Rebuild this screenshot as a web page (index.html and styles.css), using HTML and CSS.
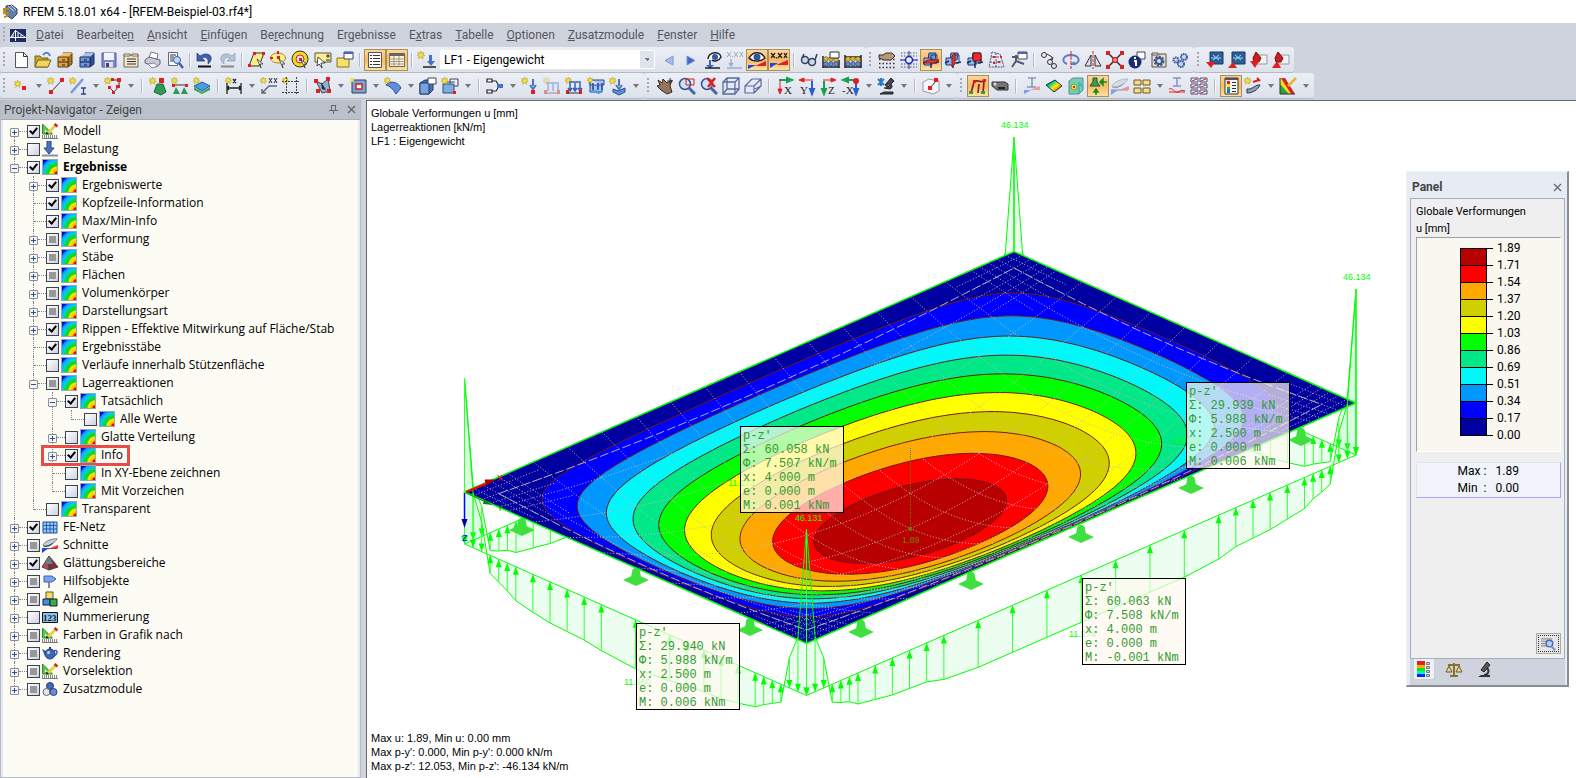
FILE: index.html
```html
<!DOCTYPE html>
<html lang="de">
<head>
<meta charset="utf-8">
<title>RFEM 5.18.01 x64 - [RFEM-Beispiel-03.rf4*]</title>
<link rel="stylesheet" href="styles.css">
</head>
<body>
<svg class="defs" aria-hidden="true">
  <defs>
    <radialGradient id="rb" cx="1" cy="1" r="1.3"><stop offset="0" stop-color="#e00"/><stop offset=".14" stop-color="#e00"/><stop offset=".2" stop-color="#fb0"/><stop offset=".38" stop-color="#ee0"/><stop offset=".45" stop-color="#2c2"/><stop offset=".6" stop-color="#0d5"/><stop offset=".68" stop-color="#0cf"/><stop offset=".84" stop-color="#19f"/><stop offset=".9" stop-color="#02f"/><stop offset="1" stop-color="#00c"/></radialGradient>
    <linearGradient id="hot" x1="0" y1="0" x2="1" y2="1"><stop offset="0" stop-color="#00f"/><stop offset=".3" stop-color="#0c8"/><stop offset=".55" stop-color="#fe0"/><stop offset="1" stop-color="#e00"/></linearGradient>
  </defs>
  <symbol id="star" viewBox="0 0 18 18"><path d="M5 0l1 3 3-1-1 3 2 1-3 1 1 3-3-2-3 2 1-3-3-1 2-1-1-3 3 1z" fill="#f2e23a" stroke="#a8941c" stroke-width=".7"/></symbol>
  <symbol id="iso" viewBox="0 0 16 16"><rect x=".5" y=".5" width="15" height="15" fill="url(#rb)" stroke="#9aa"/></symbol>
  <symbol id="draft" viewBox="0 0 16 16"><path d="M.500 1l10 10H.5z" fill="#5fc44a" stroke="#2e8b2e"/><path d="M3 6.500l2.500 2.500H3z" fill="#fff"/><path d="M6 10l8-8" stroke="#e9d04a" stroke-width="3"/><path d="M12.500 1l3 2.500" stroke="#c03030" stroke-width="2.500"/><path d="M4 11.500l.5-3 2.500 2.500z" fill="#222"/><path d="M0 13.500h16" stroke="#888" stroke-width="3" stroke-dasharray="1 1"/><path d="M0 15.500h16" stroke="#777"/></symbol>
  <symbol id="load" viewBox="0 0 16 16"><path d="M5 0h4v7h3l-5 6-5-6h3z" fill="#4a72c4" stroke="#2a4585"/><path d="M0 14.500h16" stroke="#8a8f98" stroke-width="2"/></symbol>
  <symbol id="beam" viewBox="0 0 18 18"><path d="M1 9c3-5 10-7 16-7-3 5-8 8-14 8z" fill="#c4cede" stroke="#6b7688"/><path d="M1 10c5 0 10-2 13-5-3 5-8 7-12 6z" fill="#44536c"/><path d="M0 13h17" stroke="#334"/><path d="M0 18l7-5H0z" fill="#24e"/><path d="M8 13h10V9z" fill="#e33"/></symbol>
  <symbol id="cubes" viewBox="0 0 18 18"><path d="M7 2h7l-1 7H6z" fill="#6fa0dc" stroke="#203a70"/><path d="M2 7h8v7H2z" fill="#8fb8e8" stroke="#203a70"/><path d="M9 4h6v8H9z" fill="none" stroke="#203a70"/><path d="M1 12l4-2M12 12l5-1M9 8v9" stroke="#17306c" stroke-width="1.500"/></symbol>
  <symbol id="lens" viewBox="0 0 18 18"><circle cx="7" cy="7" r="5.500" fill="#cfe0f6" stroke="#35518f" stroke-width="1.500"/><path d="M11 11l6 6" stroke="#4a63a8" stroke-width="3"/></symbol>
</svg>

<header class="titlebar">
  <svg class="logo" viewBox="0 0 16 16"><path d="M4 2l6-1 5 4v5l-5 5-6-4z" fill="#5f7ea8" stroke="#33486a"/><path d="M6 2l6 5M9 1l5 5" stroke="#c2d3ea"/><path d="M7 5H2v4c4-2 6 4 0 4" fill="none" stroke="#c08a18" stroke-width="2"/></svg>
  <h1>RFEM 5.18.01 x64 - [RFEM-Beispiel-03.rf4*]</h1>
</header>

<nav class="menubar">
  <span class="grip"></span>
  <svg class="menu-logo" viewBox="0 0 16 13"><path d="M0 0h16v13H0z" fill="#1d2c63"/><path d="M0 8.500h16M5.500 1v11M6 2l9 6M5 2L1 8M3 5v3M8 4v4M11 6v2" stroke="#fff" fill="none"/></svg>
  <a href="#"><u>D</u>atei</a><a href="#">Bearbeite<u>n</u></a><a href="#"><u>A</u>nsicht</a><a href="#"><u>E</u>infügen</a><a href="#">Be<u>r</u>echnung</a><a href="#">Er<u>g</u>ebnisse</a><a href="#">E<u>x</u>tras</a><a href="#"><u>T</u>abelle</a><a href="#"><u>O</u>ptionen</a><a href="#"><u>Z</u>usatzmodule</a><a href="#"><u>F</u>enster</a><a href="#"><u>H</u>ilfe</a>
</nav>

<div class="toolrow">
  <div class="toolbar">
    <span class="grip"></span>
    <button title="Neu"><svg viewBox="0 0 18 18"><path d="M3.500 1.500h8l4 4v11h-12z" fill="#fff" stroke="#555"/><path d="M11.500 1.500v4h4" class="sk"/></svg></button>
    <button title="Öffnen"><svg viewBox="0 0 18 18"><path d="M1 16V5h5l2 2h6v9z" fill="#c9a227" stroke="#7d6215"/><path d="M1 16l3-7h13l-3 7z" fill="#f0d468" stroke="#7d6215"/><path d="M9 4c3-4 6-2 7 1" fill="none" stroke="#4a86d0" stroke-width="2"/></svg></button>
    <button title="Projektmanager"><svg viewBox="0 0 18 18"><path d="M7 2h9v11l-4 3V6z" fill="#a5701f" stroke="#5c3c0c"/><path d="M7 2l9 0-4 4H3z" fill="#f0c477"/><path d="M2 6h10v10H2z" fill="#dca24a" stroke="#5c3c0c"/><path d="M2 11h10M6 9h3M6 14h3" stroke="#3a2505"/></svg></button>
    <button title="Blockmanager"><svg viewBox="0 0 18 18"><path d="M7 2h9v11l-4 3V6z" fill="#2d4f96" stroke="#1a2f60"/><path d="M7 2l9 0-4 4H3z" fill="#a8c0ea"/><path d="M2 6h10v10H2z" fill="#6e93d8" stroke="#1a2f60"/><path d="M2 11h10M6 9h3M6 14h3" stroke="#0d1c40"/></svg></button>
    <button title="Speichern"><svg viewBox="0 0 18 18"><path d="M2 2h14v14H2z" fill="#7f86cc" stroke="#5a60a8"/><path d="M4 2h10v7H4z" fill="#f4f4fc"/><path d="M5 11h8v5H5z" fill="#dfe4ea"/><path d="M6 12h3v4H6z" fill="#446"/></svg></button>
    <button title="Modelldaten"><svg viewBox="0 0 18 18"><path d="M2 4h14v12H2z" fill="#f2e6cc" stroke="#7a6548"/><path d="M2 3h6v2H2zM10 3h6v2h-6z" fill="#fff" stroke="#7a6548"/><path d="M5 8h9M5 10.500h9M5 13h9" class="sk"/></svg></button>
    <button title="Drucken"><svg viewBox="0 0 18 18"><path d="M5 7l2-6 7 2-1 5z" fill="#fff" stroke="#778"/><path d="M1 9l4-3 11 3v4l-4 3-11-4z" fill="#c6cad4" stroke="#667"/><path d="M4 13l6-1 4 3-6 2z" fill="#f4f6fa" stroke="#889"/></svg></button>
    <button title="Druckvorschau"><svg viewBox="0 0 18 18"><path d="M2.500 1.500h9v13h-9z" fill="#fff" stroke="#667"/><path d="M4 4h6M4 6h4M4 8h3M4 10h3" class="sk"/><circle cx="11" cy="9" r="3.500" fill="#bcd8f4" stroke="#3a5c9a"/><path d="M13 12l4 5" stroke="#3a62b0" stroke-width="2.500"/></svg></button>
    <i class="sep"></i>
    <button title="Rückgängig"><svg viewBox="0 0 18 18"><path d="M1 2v8h8L6 7c4-2 7 1 6 6 5-4 4-10-2-10-3 0-4 1-6 2z" fill="#3c5fb0" stroke="#1d3775" stroke-width=".7"/><path d="M2 15.500h13" stroke="#111" stroke-width="2"/></svg></button>
    <button title="Wiederherstellen"><svg viewBox="0 0 18 18"><path d="M17 2v8H9l3-3C8 5 5 8 6 13 1 9 2 3 8 3c3 0 4 1 6 2z" fill="#b3c4d6" stroke="#8b9bb0" stroke-width=".7"/><path d="M3 15.500h13" stroke="#888" stroke-width="2"/></svg></button>
    <i class="sep"></i>
    <button title="Auswahl Rhomboid"><svg viewBox="0 0 18 18"><path d="M6 2h10l-5 13H1z" fill="#f7ec8c" stroke="#333"/><path d="M5 1h3v3H5zM14 1h3v3h-3zM0 13h3v3H0z" class="r"/><path d="M9 8l6 5-3 0 1 4z" fill="#fff" stroke="#222" stroke-width=".7"/></svg></button>
    <button title="Auswahl Ellipse"><svg viewBox="0 0 18 18"><ellipse cx="8" cy="7" rx="7.500" ry="5" fill="#f9ee90" stroke="#b08a20"/><path d="M7 5h3v3H7zM7 0h2v3H7zM0 6h3v2H0z" class="r"/><path d="M9 8l6 5-3 0 1 4z" fill="#fff" stroke="#222" stroke-width=".7"/></svg></button>
    <button title="Auswahl Ring"><svg viewBox="0 0 18 18"><circle cx="8" cy="8" r="6" fill="none" stroke="#f0d820" stroke-width="4"/><circle cx="8" cy="8" r="8" class="sk"/><circle cx="8" cy="8" r="4" class="sr"/><path d="M7 7h3v3H7z" class="r"/><path d="M9 9l6 4-3 0 1 4z" fill="#fff" stroke="#222" stroke-width=".7"/></svg></button>
    <button title="Mehrfachauswahl"><svg viewBox="0 0 18 18"><path d="M1 2h16v9H1z" fill="#f9ee90" stroke="#555"/><path d="M12 5h4M14 3v4M12 9h4" class="sk"/><path d="M4 6l7 6-4 0 1 5-3-4-2 2z" fill="#fff" stroke="#222" stroke-width=".8"/></svg></button>
    <button title="Auswahl speziell"><svg viewBox="0 0 18 18"><path d="M1 7h12v9H1z" fill="#f5e26a" stroke="#8a7420"/><path d="M8 1h9v7H8z" fill="#fff" stroke="#445"/><path d="M8 1h9v2H8z" fill="#4b66b0"/></svg></button>
    <i class="sep"></i>
    <button class="on" title="Navigator"><svg viewBox="0 0 18 18"><path d="M2.500 1.500h13v15h-13z" fill="#fdfdfd" stroke="#555"/><path d="M7 4.500h7M7 7.500h7M7 10.500h7M7 13.500h7M4 4.500h2M4 7.500h2M4 10.500h2M4 13.500h2" class="sk"/></svg></button>
    <button class="on" title="Tabellen"><svg viewBox="0 0 18 18"><path d="M1.500 2.500h15v13h-15z" fill="#fdf3d8" stroke="#665"/><path d="M1 3h16v2H1z" fill="#666"/><path d="M1 8h16M1 10.500h16M1 13h16M6 5v11M11 5v11" stroke="#998"/></svg></button>
    <i class="sep"></i>
    <button title="Neuer Lastfall"><svg viewBox="0 0 18 18"><use href="#star" width="14" height="14" x="-1"/><path d="M11 4h3v6h3l-4 5-4-5h2z" fill="#4a72c4"/><path d="M5 16h13" stroke="#222" stroke-width="1.500"/></svg></button>
    <select class="case" aria-label="Lastfall"><option>LF1 - Eigengewicht</option></select>
    <button title="Vorheriger"><svg viewBox="0 0 18 18"><path d="M13 5v9L5 9.500z" fill="#a9bbe6" stroke="#7f95cc"/></svg></button>
    <button title="Nächster"><svg viewBox="0 0 18 18"><path d="M5 5v9l8-4.500z" fill="#3f68c8" stroke="#7a94d8"/></svg></button>
    <button title="Lasten anzeigen"><svg viewBox="0 0 18 18"><path d="M4 8c1-8 12-8 13-2-2 4-7 5-9 3" fill="#f4f6fa" stroke="#222" stroke-width="1.500"/><circle cx="11" cy="6" r="3" fill="#36589c"/><path d="M5 9v5H2l4 4 4-4H7V9z" fill="#3a66b8"/><path d="M1 17h15" stroke="#222" stroke-width="1.500"/></svg></button>
    <button title="Lastwerte"><svg viewBox="0 0 18 18"><path d="M1 1l4 5M5 1L1 6M6 6h1M8 1l4 5M12 1L8 6M14 1l3 5M17 1l-3 5" stroke="#9aa"/><path d="M5 8v7M3 12l2 3 2-3M1 17h15" stroke="#9ab0d4" stroke-width="1.500" fill="none"/></svg></button>
    <button class="on" title="Ergebnisse anzeigen"><svg viewBox="0 0 18 18"><path d="M1 7c4-7 12-7 16 0-4 4-12 4-16 0z" fill="#fff" stroke="#222" stroke-width="1.500"/><circle cx="9" cy="6" r="3.500" fill="#2c54a0"/><path d="M0 18l8-4H0z" fill="#24e"/><path d="M7 15h11V10z" class="r"/></svg></button>
    <button class="on" title="Ergebniswerte"><svg viewBox="0 0 18 18"><path d="M1 2l4 5M5 2L1 7M6 7h1M8 2l4 5M12 2L8 7M14 2l3 5M17 2l-3 5" stroke="#222" stroke-width="1.300"/><path d="M0 17l8-5H0z" fill="#24e"/><path d="M6 14h12V9z" class="r"/></svg></button>
    <i class="sep"></i>
    <button title="Brille"><svg viewBox="0 0 18 18"><circle cx="5" cy="9" r="3.500" fill="#ccd8ec" stroke="#33415e" stroke-width="1.500"/><circle cx="12" cy="11" r="3.500" fill="#ccd8ec" stroke="#33415e" stroke-width="1.500"/><path d="M2 7l2-4M15 9l2-6" stroke="#33415e" stroke-width="1.500"/></svg></button>
    <button title="Filter"><svg viewBox="0 0 18 18"><path d="M1 5v12M17 9v8M1 16h16" stroke="#222" stroke-width="1.500" fill="none"/><g fill="#dcb93a" stroke="#7a6110" stroke-width=".7"><circle cx="4" cy="8" r="2.300"/><circle cx="9" cy="8" r="2.300"/><circle cx="14" cy="9" r="2.300"/></g><g fill="#6a8cd0" stroke="#20376c" stroke-width=".7"><circle cx="4" cy="13" r="2.300"/><circle cx="9" cy="13" r="2.300"/><circle cx="14" cy="13" r="2.300"/></g><path d="M8 1h9v6H8z" fill="#fff" stroke="#334"/></svg></button>
    <button title="Rechner"><svg viewBox="0 0 18 18"><path d="M1 4v13M17 4v13M1 16h16M1 6h16" stroke="#222" stroke-width="1.500" fill="none"/><g fill="#dcb93a" stroke="#7a6110" stroke-width=".7"><circle cx="4" cy="8" r="2.300"/><circle cx="9" cy="8" r="2.300"/><circle cx="14" cy="8" r="2.300"/></g><g fill="#6a8cd0" stroke="#20376c" stroke-width=".7"><circle cx="4" cy="13" r="2.300"/><circle cx="9" cy="13" r="2.300"/><circle cx="14" cy="13" r="2.300"/></g></svg></button>
  </div>
  <div class="toolbar">
    <span class="grip"></span>
    <button title="Raster"><svg viewBox="0 0 18 18"><path d="M1 4.500h16M1 8.500h16M1 12.500h16M1 16.500h16" stroke="#333" stroke-width="1.500" stroke-dasharray="1.500 2"/><path d="M1 4h4l3-2h6l3 3-4 4H6L1 7z" fill="#b89878" stroke="#3c3028"/></svg></button>
    <button title="Fangen"><svg viewBox="0 0 18 18"><path d="M1 2h16M1 5h16M1 13h16M1 16h16M1 9h16" stroke="#555" stroke-dasharray="1.500 1.500"/><path d="M9 0v18M0 9h18" stroke="#1a2ac0"/><circle cx="9" cy="9" r="3.500" fill="#e8ecf5" stroke="#1a2ac0" stroke-width="1.500"/></svg></button>
    <button class="on" title="Arbeitsebene XY"><svg viewBox="0 0 18 18"><use href="#cubes"/><path d="M1 12l5-3h11l-4 3z" fill="#e23b3b" stroke="#8d1515"/></svg></button>
    <button title="Arbeitsebene YZ"><svg viewBox="0 0 18 18"><use href="#cubes"/><path d="M8 5l3-3v11l-3 3z" fill="#e23b3b" stroke="#8d1515"/></svg></button>
    <button title="Arbeitsebene XZ"><svg viewBox="0 0 18 18"><use href="#cubes"/><path d="M7 2h8v8H7z" fill="#f02a2a" stroke="#5c0f0f"/></svg></button>
    <button title="Rasterlinien"><svg viewBox="0 0 18 18"><path d="M4 1L1 16h15L12 3zM8 2v14M3 6h10M2 11h13" class="n" stroke="#557" stroke-dasharray="2 1"/><path d="M5 5h2v2H5zM10 10h2v2h-2zM5 11h2v2H5zM12 5h2v2h-2z" class="r"/></svg></button>
    <button title="Objektfang"><svg viewBox="0 0 18 18"><path d="M2 16l4-6M6 10l8 3M6 10V4M2 6h6" stroke="#557" stroke-width="2" fill="none"/><path d="M8 1h9v7H8z" fill="#fff" stroke="#445"/><path d="M8 1h9v2H8z" fill="#4b66b0"/></svg></button>
    <i class="sep"></i>
    <button title="Kopieren"><svg viewBox="0 0 18 18"><circle cx="4" cy="4" r="2.500" class="sk"/><circle cx="10" cy="11" r="2.500" class="sk"/><circle cx="14" cy="15" r="2.500" class="sk"/><path d="M7 3l5 3v3M10 8l2 1 1-3" class="sk"/></svg></button>
    <button title="Drehen"><svg viewBox="0 0 18 18"><path d="M5 13C-2 10 2 4 9 4s11 6 4 9l-2-2M13 13h-4" fill="none" stroke="#5a7cc0" stroke-width="2"/><path d="M9 0v18" class="sr" stroke-dasharray="4 1"/></svg></button>
    <button title="Spiegeln"><svg viewBox="0 0 18 18"><path d="M7 4v11H1zM11 4v11h6z" fill="#dde" stroke="#333"/><path d="M9 0v18" class="sr" stroke-dasharray="3 1"/></svg></button>
    <button title="Verbinden"><svg viewBox="0 0 18 18"><path d="M2 2l14 14M16 2L2 16" stroke="#333" stroke-width="1.500"/><path d="M0 0h4v4H0zM14 0h4v4h-4zM0 14h4v4H0zM14 14h4v4h-4z" class="r"/><circle cx="9" cy="9" r="2.500" fill="#f88" stroke="#c00"/></svg></button>
    <button title="Info"><svg viewBox="0 0 18 18"><path d="M9 1h8v7H9z" fill="#fff" stroke="#445"/><circle cx="7" cy="11" r="6.500" fill="#1b2a72"/><path d="M6 10h2v5M7 6v2" stroke="#fff" stroke-width="2" fill="none"/></svg></button>
    <button title="Einstellungen"><svg viewBox="0 0 18 18"><path d="M2 3h14v13H2z" fill="#e8e0d0" stroke="#5c5140"/><path d="M2 2h6v2H2z" fill="#fff" stroke="#5c5140"/><circle cx="9" cy="10" r="4" fill="none" stroke="#3a5a9c" stroke-width="3" stroke-dasharray="2 1"/><circle cx="9" cy="10" r="3" fill="none" stroke="#3a5a9c" stroke-width="2"/></svg></button>
    <button title="Optionen"><svg viewBox="0 0 18 18"><g fill="#cdd8ee" stroke="#3a5a9c" stroke-width="2" stroke-dasharray="1.500 .6"><circle cx="4" cy="9" r="2.500"/><circle cx="12" cy="6" r="3"/><circle cx="9" cy="13" r="3"/></g></svg></button>
  </div>
  <div class="toolbar">
    <span class="grip"></span>
    <button title="Import"><svg viewBox="0 0 18 18"><path d="M4 1h13v12H4z" fill="#2c5f96" stroke="#173a63"/><path d="M7 4l6 5M7 9l6-5M5 7h10" stroke="#a8d4f4"/><path d="M0 11h9l-4 6z" class="r"/></svg></button>
    <button title="Export"><svg viewBox="0 0 18 18"><path d="M4 1h13v12H4z" fill="#2c5f96" stroke="#173a63"/><path d="M7 4l6 5M7 9l6-5M5 7h10" stroke="#a8d4f4"/><path d="M0 17h9l-4-6z" class="r"/></svg></button>
    <button title="Import Modul"><svg viewBox="0 0 18 18"><path d="M6 4h11v9H6z" fill="#f2f2f2" stroke="#99a"/><path d="M6 1l5 6-2 4H4l-1-4z" fill="#c81e1e" stroke="#7a0d0d"/><path d="M0 10h9l-4 7z" class="r"/></svg></button>
    <button title="Export Modul"><svg viewBox="0 0 18 18"><path d="M6 4h11v9H6z" fill="#f2f2f2" stroke="#99a"/><path d="M6 1l5 6-2 4H4l-1-4z" fill="#c81e1e" stroke="#7a0d0d"/><path d="M0 17h9l-4-7z" class="r"/></svg></button>
  </div>
</div>

<div class="toolrow second">
  <div class="toolbar">
    <span class="grip"></span>
    <button title="Knoten"><svg viewBox="0 0 18 18"><use href="#star" width="13" height="13" x="2" y="3"/><path d="M10 9h4v4h-4z" class="r"/></svg></button><button class="drop" title="Knoten wählen"></button>
    <button title="Linie"><svg viewBox="0 0 18 18"><use href="#star" width="13" height="13"/><path d="M4 15L15 3" class="sk"/><path d="M13 1h4v4h-4zM2 13h4v4H2z" class="r"/></svg></button>
    <button title="Stab"><svg viewBox="0 0 18 18"><use href="#star" width="13" height="13"/><path d="M2 16L14 2" stroke="#7b9ad8" stroke-width="2.500"/><path d="M12 11h5M14.500 11v6M12 17h5" stroke="#2c4a8c" stroke-width="1.300"/></svg></button><button class="drop" title="Stab wählen"></button>
    <button title="Polylinie"><svg viewBox="0 0 18 18"><use href="#star" width="13" height="13"/><path d="M8 3h7v6l-5 6-4-4" class="sk"/><path d="M7 1h3v3H7zM13 1h4v4h-4zM12 8h4v3h-4zM4 9h3v3H4zM8 14h3v3H8z" class="r"/></svg></button><button class="drop" title="Polylinie wählen"></button>
    <i class="sep"></i>
    <button title="Knotenlager"><svg viewBox="0 0 18 18"><use href="#star" width="13" height="13"/><path d="M10 1h5v5h-5z" class="r"/><path d="M8 7h6l3 8-5 3-7-3z" fill="#2f9a58" stroke="#1b6a38"/></svg></button>
    <button title="Linienlager"><svg viewBox="0 0 18 18"><use href="#star" width="12" height="12"/><path d="M3 8h12" class="sk"/><path d="M1 7h3v3H1zM14 7h3v3h-3z" class="r"/><path d="M5 10l4 7H2zM13 10l4 7h-7z" fill="#2f9a58"/></svg></button>
    <button title="Fläche"><svg viewBox="0 0 18 18"><path d="M1 9l8-4 8 4-8 5z" fill="#4a9de0" stroke="#1c5c98"/><path d="M1 10l8 5 8-5v3l-8 4-8-4z" fill="#3aa655"/><use href="#star" width="12" height="12"/></svg></button>
    <i class="sep"></i>
    <button title="Bemaßung"><svg viewBox="0 0 18 18"><use href="#star" width="12" height="12"/><path d="M2 6v11M16 6v11M2 11h14M4 9l-2 2 2 2M14 9l2 2-2 2M8 2l3 4M11 2L8 6" stroke="#222" fill="none" stroke-width="1.300"/></svg></button><button class="drop" title="Bemaßung wählen"></button>
    <button title="Kommentar"><svg viewBox="0 0 18 18"><use href="#star" width="12" height="12"/><path d="M9 1l3 5M12 1L9 6M14 1l3 5M17 1l-3 5" stroke="#222"/><path d="M17 9H9l-7 7M2 12v4h4" fill="none" stroke="#667" stroke-width="1.500"/></svg></button>
    <button title="Hilfslinien"><svg viewBox="0 0 18 18"><use href="#star" width="12" height="12"/><path d="M4.500 0v18M14.500 0v18M0 4.500h18M0 15.500h18" stroke="#444" stroke-dasharray="2 1"/></svg></button>
    <i class="sep"></i>
    <button title="Fläche teilen"><svg viewBox="0 0 18 18"><path d="M2 4l6 3 6-5 2 12-8 2z" fill="#8db0dc" stroke="#444"/><path d="M0 2h4v4H0zM12 0h4v4h-4zM13 12h4v4h-4zM2 12h4v4H2z" class="r"/><path d="M7 5l5 8-4-1z" fill="#222"/></svg></button><button class="drop" title="Fläche wählen"></button>
    <button title="Öffnung"><svg viewBox="0 0 18 18"><path d="M3 3h14v13H3z" fill="#7ea0d6" stroke="#345"/><path d="M7 7h6v5H7z" fill="#fff" stroke="#c22" stroke-width="1.500"/><circle cx="3" cy="3" r="2" fill="#f2e23a"/></svg></button><button class="drop" title="Öffnung wählen"></button>
    <button title="Schale"><svg viewBox="0 0 18 18"><path d="M2 8c5-5 12-3 15 3l-5 6C9 12 6 9 2 8z" fill="#5d8fdc" stroke="#28508f"/><use href="#star" width="12" height="12"/></svg></button><button class="drop" title="Schale wählen"></button>
    <button title="Volumenkörper"><svg viewBox="0 0 18 18"><path d="M1 6l5-3h8v10l-4 4H1z" fill="#4472b4" stroke="#1d3d70"/><path d="M1 6h9v11H1z" fill="#7aa3dc" stroke="#1d3d70"/><path d="M9 1h8v6H9z" fill="#fff" stroke="#445"/></svg></button>
    <button title="Neues Volumen"><svg viewBox="0 0 18 18"><path d="M9 2h8v7H9zM6 5h8" fill="#eef" stroke="#445"/><path d="M2 7h11v9H2z" fill="#7eaadc" stroke="#28508f"/><use href="#star" width="13" height="13"/><path d="M12 14h3v3h-3z" class="r"/></svg></button><button class="drop" title="Volumen wählen"></button>
    <i class="sep"></i>
    <button title="Gelenk"><svg viewBox="0 0 18 18"><path d="M1 2h5v3H1zM1 13h5v3H1zM6 4h4l3 5M6 14h4l3-5" fill="#fff" stroke="#222" stroke-width="1.200"/><path d="M11 7h6v4h-6z" fill="#4a72c4"/></svg></button><button class="drop" title="Gelenk wählen"></button>
    <button title="Knotenlast"><svg viewBox="0 0 18 18"><use href="#star" width="13" height="13"/><path d="M12 2v7M9 8l3 4 3-4" stroke="#4a72c4" stroke-width="2" fill="none"/><path d="M10 13h4v4h-4z" class="r"/></svg></button>
    <button class="off" title="Stablast"><svg viewBox="0 0 18 18"><use href="#star" width="12" height="12"/><path d="M3 6h13M5 6v8M10 6v8M15 6v8" stroke="#4a72c4" stroke-width="1.500"/><path d="M1 13h3v4H1zM14 13h3v4h-3z" class="r"/><path d="M3 16h12" class="sk"/></svg></button>
    <button title="Linienlast"><svg viewBox="0 0 18 18"><use href="#star" width="12" height="12"/><path d="M4 5h12M5 6v8M10 6v8M15 6v8M3 11l2 3 2-3M8 11l2 3 2-3M13 11l2 3 2-3" stroke="#3a62b4" stroke-width="1.500" fill="none"/><path d="M1 13h3v4H1zM14 13h3v4h-3z" class="r"/><path d="M3 16h12" class="sk"/></svg></button>
    <button title="Flächenlast"><svg viewBox="0 0 18 18"><path d="M3 3h14v5H3zM3 3v12h12V8" fill="#a8c4ec" stroke="#234b8c"/><path d="M6 6v7M11 6v7M15 6v7" stroke="#3a62b4" stroke-width="2"/><path d="M1 14l5-1 10 2-4 2z" fill="#4d9ae0"/><use href="#star" width="11" height="11"/></svg></button>
    <button title="Freie Last"><svg viewBox="0 0 18 18"><use href="#star" width="13" height="13"/><path d="M10 2v7M7 8l3 4 3-4" stroke="#4a72c4" stroke-width="2" fill="none"/><path d="M4 12l5 2 7-3v4l-6 3-6-3z" fill="#5d8fdc" stroke="#28508f"/></svg></button><button class="drop" title="Last wählen"></button>
  </div>
  <div class="toolbar">
    <span class="grip"></span>
    <button title="Verschieben"><svg viewBox="0 0 18 18"><path d="M2 3l4 3 1-4 4 4 5-3-2 6 2 6-5 2-6-4-4-4 3-1z" fill="#94755c" stroke="#362920"/><path d="M14 1v6M11 4h6" class="sk"/></svg></button>
    <button title="Zoom"><svg viewBox="0 0 18 18"><use href="#lens"/><path d="M8 2h8v6H8z" class="n" stroke="#c22"/></svg></button>
    <button title="Zoom zurück"><svg viewBox="0 0 18 18"><use href="#lens"/><path d="M7 1l8 9M15 1L8 10" class="sr" stroke-width="2.500"/></svg></button>
    <button title="Isometrie"><svg viewBox="0 0 18 18"><path d="M5 1h12v11H5zM1 5h12v12H1zM1 5l4-4M13 5l4-4M13 17l4-5M1 17l4-5" fill="none" stroke="#5a6c9c" stroke-width="1.300"/></svg></button>
    <button title="Perspektive"><svg viewBox="0 0 18 18"><path d="M8 2h9v7l-6 3M1 9h9v7H1zM1 9l7-7M10 9l7-7M10 16l7-7" fill="#e4e9f4" stroke="#5a6c9c" stroke-width="1.200"/></svg></button>
    <i class="sep"></i>
    <button title="Ansicht X"><svg viewBox="0 0 18 18"><path d="M3 3h10M11 1l5 2-5 2z" class="sg"/><path d="M4 4v9M2 12l2 5 2-5z" class="sr"/><text x="8" y="17" class="ax">X</text></svg></button>
    <button title="Ansicht Y"><svg viewBox="0 0 18 18"><path d="M5 3h10M6 1L1 3l5 2z" class="sr"/><path d="M14 4v9M12 12l2 5 2-5z" class="sb"/><text x="2" y="17" class="ax">Y</text></svg></button>
    <button title="Ansicht Z"><svg viewBox="0 0 18 18"><path d="M3 3h10M11 1l5 2-5 2z" class="sr"/><path d="M4 4v9M2 12l2 5 2-5z" class="sg"/><text x="8" y="17" class="ax">Z</text></svg></button>
    <button title="Ansicht -X"><svg viewBox="0 0 18 18"><path d="M5 3h8M6 1L1 3l5 2z" class="sg"/><path d="M14 4v9M12 12l2 5 2-5z" class="sb"/><circle cx="14" cy="4" r="3" class="r"/><text x="0" y="17" class="ax">-X</text></svg></button><button class="drop" title="Ansicht wählen"></button>
    <button title="Sichtbarkeit"><svg viewBox="0 0 18 18"><path d="M1 2l6 6M7 2L1 8M4 1v8" stroke="#2a7ac8" stroke-width="2"/><path d="M14 1l3 3-6 6-3-2zM7 11l6 1c3-1 2-4 1-5M3 17h13v-2H7z" fill="#445" stroke="#222"/></svg></button><button class="drop" title="Sichtbarkeit wählen"></button>
    <i class="sep"></i>
    <button title="Schnitt"><svg viewBox="0 0 18 18"><path d="M1 5l6-3 10 2v10l-6 3-10-3z" fill="#f5f6fa" stroke="#99a"/><path d="M8 11l6-7" class="sk"/><path d="M12 1h4v4h-4zM6 9h4v4H6z" class="r"/></svg></button><button class="drop" title="Schnitt wählen"></button>
  </div>
  <div class="toolbar">
    <span class="grip"></span>
    <button class="on" title="Verformung"><svg viewBox="0 0 18 18"><path d="M2 16L5 5c3-3 5 1 10-1l-1 12M9 16l1-9" fill="none" stroke="#8a2020" stroke-width="1.700"/><path d="M0 14h4v3H0zM12 14h4v3h-4z" class="g"/><path d="M4 3h3v3H4zM14 2h3v3h-3z" class="r"/></svg></button>
    <button title="Video"><svg viewBox="0 0 18 18"><path d="M1 5h13l3 2v6H6l-5-4z" fill="#777" stroke="#333"/><circle cx="4" cy="7" r="1.500" fill="#ddd"/><path d="M7 10h7v2H7z" fill="#222"/></svg></button>
    <i class="sep"></i>
    <button title="Stabschnittgrößen"><svg viewBox="0 0 18 18"><path d="M5 1h8M9 1v9M4 10h9" stroke="#8296b8" stroke-width="1.500"/><path d="M1 17l7-4H1z" fill="#7a9af0"/><path d="M7 13h10V9z" fill="#f29a9a"/></svg></button>
    <button title="Flächenergebnisse"><svg viewBox="0 0 18 18"><path d="M1 8l9-5 7 6-8 6z" fill="url(#hot)" stroke="#135"/></svg></button>
    <button title="Volumenergebnisse"><svg viewBox="0 0 18 18"><path d="M2 4l4-3h10v12l-4 4H2z" fill="#73cfae" stroke="#5a8a98"/><circle cx="7" cy="10" r="3" fill="#f3e35a" stroke="#58b048"/><circle cx="7" cy="10" r="1.200" class="r"/><path d="M12 5v11M13 6l2 4" stroke="#2f9ec0"/></svg></button>
    <button class="on" title="Lagerreaktionen"><svg viewBox="0 0 18 18"><path d="M4 1h4v4l3 4H1l3-4z" fill="#3d9a5a" stroke="#1b5a30"/><path d="M18 5h-5M14 2l-3 3 3 3z" fill="#1a8a1a" stroke="#1a8a1a" stroke-width="1.500"/><path d="M7 18v-4M5 15l2-3 2 3z" fill="#1a8a1a" stroke="#1a8a1a" stroke-width="1.500"/></svg></button>
    <button class="off" title="Schnitte"><svg viewBox="0 0 18 18"><use href="#beam"/></svg></button>
    <button title="Fenster anordnen"><svg viewBox="0 0 18 18"><path d="M1 3h7v5H1zM10 3h7v5h-7zM1 11h7v5H1zM10 11h7v5h-7z" fill="#f3dc8c" stroke="#6c5a20"/></svg></button><button class="drop" title="Anordnung wählen"></button>
    <button title="Verlauf"><svg viewBox="0 0 18 18"><path d="M5 1h8M9 1v8M5 9h8" stroke="#8296b8" stroke-width="1.500"/><path d="M1 12c4-2 6 5 9 3s4-2 7-1M1 15h16" class="sr"/></svg></button>
    <button title="Diagramme"><svg viewBox="0 0 18 18"><path d="M1 1h7v4H1zM10 1h7v4h-7zM1 7h7v4H1zM10 7h7v4h-7zM1 13h7v4H1zM10 13h7v4h-7z" fill="#eef2fc" stroke="#44507c"/><path d="M2 4l5-2M11 4l5-2M2 10l5-2M11 10l5-2M2 16l5-2M11 16l5-2" class="sr"/></svg></button>
    <i class="sep"></i>
    <button class="on" title="Panel"><svg viewBox="0 0 18 18"><path d="M3 1h13v16H3z" fill="#f4f4f4" stroke="#333"/><path d="M3 1h13v2H3z" fill="#555"/><path d="M5 4h3v3H5z" class="r"/><path d="M5 7h3v3H5z" class="y"/><path d="M5 10h3v3H5z" class="g"/><path d="M5 13h3v3H5z" class="b"/><path d="M10 5.500h4M10 8.500h4M10 11.500h4M10 14.500h4" class="sk"/></svg></button>
    <button title="Werkzeuge"><svg viewBox="0 0 18 18"><use href="#star" width="13" height="13"/><path d="M9 5l6-2M13 1l3 3" class="sr" stroke-width="2"/><path d="M3 12c5 1 9-5 13-4-2 5-8 8-13 8z" fill="#8ca0c0" stroke="#334"/></svg></button><button class="drop" title="Werkzeug wählen"></button>
    <button title="Farbskala"><svg viewBox="0 0 18 18"><path d="M1 1v16h14z" class="g"/><path d="M1 1l14 16h-5L1 7z" class="y"/><path d="M2 1h4l10 16h-4z" class="r"/><path d="M9 9l8-8" stroke="#e2b830" stroke-width="2.500"/><path d="M1 1v16h15" class="sk"/></svg></button><button class="drop" title="Farbskala wählen"></button>
  </div>
</div>

<main>
  <aside class="navigator">
    <div class="nav-head"><h2>Projekt-Navigator - Zeigen</h2>
      <button title="Anheften"><svg viewBox="0 0 9 9"><path d="M2.500 0v5M6.500 0v5M2 .5h5M0 5.500h9M4.500 6v3" fill="none" stroke="#666"/></svg></button>
      <button title="Schließen"><svg viewBox="0 0 9 9"><path d="M1 1l7 7M8 1L1 8" stroke="#666" stroke-width="1.400"/></svg></button></div>
    <ul class="tree">
      <li><div class="row"><button class="tg plus" title="Öffnen"></button><label><input type="checkbox" checked><svg><use href="#draft"/></svg>Modell</label></div></li>
      <li><div class="row"><button class="tg plus" title="Öffnen"></button><label><input type="checkbox"><svg><use href="#load"/></svg>Belastung</label></div></li>
      <li><div class="row"><button class="tg" title="Schließen"></button><label><input type="checkbox" checked><svg><use href="#iso"/></svg><b>Ergebnisse</b></label></div>
        <ul>
          <li><div class="row"><button class="tg plus" title="Öffnen"></button><label><input type="checkbox" checked><svg><use href="#iso"/></svg>Ergebniswerte</label></div></li>
          <li><div class="row leaf"><label><input type="checkbox" checked><svg><use href="#iso"/></svg>Kopfzeile-Information</label></div></li>
          <li><div class="row leaf"><label><input type="checkbox" checked><svg><use href="#iso"/></svg>Max/Min-Info</label></div></li>
          <li><div class="row"><button class="tg plus" title="Öffnen"></button><label><input type="checkbox" class="mixed"><svg><use href="#iso"/></svg>Verformung</label></div></li>
          <li><div class="row"><button class="tg plus" title="Öffnen"></button><label><input type="checkbox" class="mixed"><svg><use href="#iso"/></svg>Stäbe</label></div></li>
          <li><div class="row"><button class="tg plus" title="Öffnen"></button><label><input type="checkbox" class="mixed"><svg><use href="#iso"/></svg>Flächen</label></div></li>
          <li><div class="row"><button class="tg plus" title="Öffnen"></button><label><input type="checkbox" class="mixed"><svg><use href="#iso"/></svg>Volumenkörper</label></div></li>
          <li><div class="row"><button class="tg plus" title="Öffnen"></button><label><input type="checkbox" class="mixed"><svg><use href="#iso"/></svg>Darstellungsart</label></div></li>
          <li><div class="row"><button class="tg plus" title="Öffnen"></button><label><input type="checkbox" checked><svg><use href="#iso"/></svg>Rippen - Effektive Mitwirkung auf Fläche/Stab</label></div></li>
          <li><div class="row leaf"><label><input type="checkbox" checked><svg><use href="#iso"/></svg>Ergebnisstäbe</label></div></li>
          <li><div class="row leaf"><label><input type="checkbox"><svg><use href="#iso"/></svg>Verläufe innerhalb Stützenfläche</label></div></li>
          <li><div class="row"><button class="tg" title="Schließen"></button><label><input type="checkbox" class="mixed"><svg><use href="#iso"/></svg>Lagerreaktionen</label></div>
            <ul>
              <li><div class="row"><button class="tg" title="Schließen"></button><label><input type="checkbox" checked><svg><use href="#iso"/></svg>Tatsächlich</label></div>
                <ul>
                  <li><div class="row leaf"><label><input type="checkbox"><svg><use href="#iso"/></svg>Alle Werte</label></div></li>
                </ul></li>
              <li><div class="row"><button class="tg plus" title="Öffnen"></button><label><input type="checkbox"><svg><use href="#iso"/></svg>Glatte Verteilung</label></div></li>
              <li><div class="row marked"><button class="tg plus" title="Öffnen"></button><label><input type="checkbox" checked><svg><use href="#iso"/></svg>Info</label></div></li>
              <li><div class="row leaf"><label><input type="checkbox"><svg><use href="#iso"/></svg>In XY-Ebene zeichnen</label></div></li>
              <li><div class="row leaf"><label><input type="checkbox"><svg><use href="#iso"/></svg>Mit Vorzeichen</label></div></li>
            </ul></li>
          <li><div class="row leaf"><label><input type="checkbox"><svg><use href="#iso"/></svg>Transparent</label></div></li>
        </ul></li>
      <li><div class="row"><button class="tg plus" title="Öffnen"></button><label><input type="checkbox" checked><svg viewBox="0 0 16 16"><path d="M1 3h14v11H1z" fill="#9cc8f4" stroke="#1d4f9c"/><path d="M1 6.500h14M1 10h14M4.500 3v11M8 3v11M11.500 3v11" stroke="#1d5fb4"/></svg>FE-Netz</label></div></li>
      <li><div class="row"><button class="tg plus" title="Öffnen"></button><label><input type="checkbox" class="mixed"><svg><use href="#beam"/></svg>Schnitte</label></div></li>
      <li><div class="row"><button class="tg plus" title="Öffnen"></button><label><input type="checkbox" checked><svg viewBox="0 0 16 16"><path d="M7 1L0 12l7 3z" fill="#b04a58" stroke="#444"/><path d="M7 1l9 11-9 3z" fill="#8a2a38" stroke="#444"/><path d="M7 1l4 8-8 0z" fill="#6b8088"/></svg>Glättungsbereiche</label></div></li>
      <li><div class="row"><button class="tg plus" title="Öffnen"></button><label><input type="checkbox" class="mixed"><svg viewBox="0 0 16 16"><path d="M2 3h8l4 3-4 3H2z" fill="#7ea4ec" stroke="#3a5cae"/><path d="M7 9v6" stroke="#889" stroke-width="2"/></svg>Hilfsobjekte</label></div></li>
      <li><div class="row"><button class="tg plus" title="Öffnen"></button><label><input type="checkbox" class="mixed"><svg viewBox="0 0 16 16"><path d="M4 1h7v7H4z" fill="#f0dc70" stroke="#665a18"/><path d="M1 8h7v6H1z" fill="#4a8ae0" stroke="#123"/><path d="M8 8h7v7H8z" fill="#38b048" stroke="#123"/></svg>Allgemein</label></div></li>
      <li><div class="row"><button class="tg plus" title="Öffnen"></button><label><input type="checkbox"><svg viewBox="0 0 16 16"><path d="M.5 3.500h15v10H.5z" fill="#8cc0ec" stroke="#111"/><text x="1" y="12" class="num">123</text></svg>Nummerierung</label></div></li>
      <li><div class="row"><button class="tg plus" title="Öffnen"></button><label><input type="checkbox" class="mixed"><svg><use href="#draft"/></svg>Farben in Grafik nach</label></div></li>
      <li><div class="row"><button class="tg plus" title="Öffnen"></button><label><input type="checkbox" class="mixed"><svg viewBox="0 0 16 16"><path d="M4 6L0 4l3 7z" fill="#345aa8"/><ellipse cx="8" cy="9" rx="5" ry="5" fill="#3f66b8" stroke="#1f3c7c"/><path d="M12 6c5-2 3 4 0 5" fill="none" stroke="#345aa8" stroke-width="1.500"/><path d="M8 2v2" stroke="#1f3c7c" stroke-width="2"/><circle cx="6.500" cy="7.500" r="1.500" fill="#c8d8f4"/></svg>Rendering</label></div></li>
      <li><div class="row"><button class="tg plus" title="Öffnen"></button><label><input type="checkbox" class="mixed"><svg><use href="#draft"/></svg>Vorselektion</label></div></li>
      <li><div class="row"><button class="tg plus" title="Öffnen"></button><label><input type="checkbox" class="mixed"><svg viewBox="0 0 16 16"><circle cx="8" cy="5" r="3.500" fill="#4468b8" stroke="#23407c"/><circle cx="4.500" cy="11" r="3.500" fill="#dfe4f0" stroke="#667"/><circle cx="11.500" cy="11" r="3.500" fill="#6c8cd0" stroke="#23407c"/></svg>Zusatzmodule</label></div></li>
    </ul>
  </aside>

  <section class="viewport">
    <svg class="model" viewBox="367 101 1209 677" preserveAspectRatio="xMinYMin meet">
      <g id="back"></g>
      <g id="plate"></g>
      <g id="front"></g>
      <g class="axes">
        <path d="M466 492l24-10" stroke="#f00" stroke-width="2"/><path d="M494 480l-9 0 2 5z" fill="#a00" stroke="#a00"/>
        <path d="M466 493l20 9" stroke="#0a0"/><path d="M493 505l-9-5-1 4z" fill="#080"/>
        <path d="M464.500 493v28" stroke="#00f" stroke-width="1.500"/><path d="M461.500 519h6l-3 9z" fill="#00a"/>
        <text x="497" y="481" fill="#f00">X</text><text x="497" y="511" fill="#0a0">Y</text><text x="462" y="541" fill="#00f">Z</text>
        <path d="M910.500 448v80" stroke="#6a7a00" stroke-dasharray="1 1"/><circle cx="910.500" cy="529" r="2" fill="#6a7a00"/>
        <text x="902" y="543" fill="#7a7a00">1.89</text>
      </g>
      <g class="values">
        <text x="1001" y="128">46.134</text><text x="1343" y="280">46.134</text><text x="795" y="521">46.131</text>
        <text x="624" y="685">11.980</text><text x="728" y="486">11.273</text><text x="1173" y="444">12.053</text><text x="1069" y="637">11.274</text>
      </g>
    </svg>
    <p class="caption">Globale Verformungen u [mm]<br>Lagerreaktionen [kN/m]<br>LF1 : Eigengewicht</p>
    <p class="caption foot">Max u: 1.89, Min u: 0.00 mm<br>Max p-y': 0.000, Min p-y': 0.000 kN/m<br>Max p-z': 12.053, Min p-z': -46.134 kN/m</p>
    <pre class="tip t1">p-z'
Σ: 60.058 kN
Φ: 7.507 kN/m
x: 4.000 m
e: 0.000 m
M: 0.001 kNm</pre>
    <pre class="tip t2">p-z'
Σ: 29.939 kN
Φ: 5.988 kN/m
x: 2.500 m
e: 0.000 m
M: 0.006 kNm</pre>
    <pre class="tip t3">p-z'
Σ: 29.940 kN
Φ: 5.988 kN/m
x: 2.500 m
e: 0.000 m
M: 0.006 kNm</pre>
    <pre class="tip t4">p-z'
Σ: 60.063 kN
Φ: 7.508 kN/m
x: 4.000 m
e: 0.000 m
M: -0.001 kNm</pre>

    <div class="panel">
      <div class="panel-head"><h2>Panel</h2><button title="Schließen"><svg viewBox="0 0 9 9"><path d="M1 1l7 7M8 1L1 8" stroke="#666" stroke-width="1.300"/></svg></button></div>
      <div class="panel-body">
        <p>Globale Verformungen</p><p>u [mm]</p>
        <div class="scale">
          <ol class="bands"><li class="c10"></li><li class="c9"></li><li class="c8"></li><li class="c7"></li><li class="c6"></li><li class="c5"></li><li class="c4"></li><li class="c3"></li><li class="c2"></li><li class="c1"></li><li class="c0"></li></ol>
          <ol class="ticks"><li>1.89</li><li>1.71</li><li>1.54</li><li>1.37</li><li>1.20</li><li>1.03</li><li>0.86</li><li>0.69</li><li>0.51</li><li>0.34</li><li>0.17</li><li>0.00</li></ol>
        </div>
        <dl><dt>Max</dt><dd>:</dd><dd>1.89</dd><dt>Min</dt><dd>:</dd><dd>0.00</dd></dl>
        <button class="detail" title="Optionen"><svg viewBox="0 0 18 14"><path d="M1 2h12M1 4.500h7M1 7h6M1 9.500h6" stroke="#777"/><circle cx="10" cy="7" r="3.500" fill="#b8cdf4" stroke="#4a66b8" stroke-width="1.500"/><path d="M12 10l4 4" stroke="#7a8cc8" stroke-width="2"/></svg></button>
      </div>
      <div class="tabs">
        <button class="active" title="Farbskala"><svg viewBox="0 0 16 16"><path d="M1 0h8v4H1z" class="r"/><path d="M1 4h8v3H1z" fill="#fa0"/><path d="M1 7h8v3H1z" fill="#0e0"/><path d="M1 10h8v3H1z" fill="#0ee"/><path d="M1 13h8v3H1z" fill="#02e"/><path d="M10.500 1.500h3v2h-3zM10.500 5.500h3v2h-3zM10.500 9.500h3v2h-3zM10.500 13.500h3v2h-3z" fill="#ccc" stroke="#777"/></svg></button>
        <button title="Faktoren"><svg viewBox="0 0 16 16"><path d="M8 1v12M2 3h12M4 14h8" stroke="#8a7328" stroke-width="2"/><path d="M3 4L0 10h6zM13 4l-3 6h6z" fill="#e6d79c" stroke="#6c5a20"/></svg></button>
        <button title="Filter"><svg viewBox="0 0 16 16"><path d="M11 0l3 3-6 7-3-2z" fill="#555" stroke="#222"/><path d="M11 6c3 3 1 7-3 7" fill="none" stroke="#333" stroke-width="2"/><path d="M2 15h12v-2H5z" fill="#333"/></svg></button>
      </div>
    </div>
  </section>
</main>
<script src="script.js"></script>
</body>
</html>
```
FILE: styles.css
```css
*, ::before, ::after { box-sizing: border-box; }
body {
  margin: 0;
  height: 100vh;
  display: flex;
  flex-direction: column;
  overflow: hidden;
  background: #cfd3dd;
  color: #000;
  font: 12px/18px "Open Sans", "Noto Sans", sans-serif;
}
h1, h2, p, ul, ol, dl, dd, pre { margin: 0; padding: 0; font-size: inherit; font-weight: normal; }
ul, ol { list-style: none; }
button { margin: 0; padding: 0; border: 0; background: none; font: inherit; }
svg { display: block; overflow: visible; }
.defs { position: absolute; width: 0; height: 0; }

.r { fill: #e02020; }
.b { fill: #2c5fd0; }
.y { fill: #f8e020; }
.g { fill: #2fa040; }
.n { fill: none; }
.sk { fill: none; stroke: #333; }
.sr { fill: none; stroke: #e02020; }
.sg { fill: #18a050; stroke: #18a050; stroke-width: 2px; }
.sb { fill: #2c5fd0; stroke: #2c5fd0; stroke-width: 2px; }
path.sr[d$="z"] { fill: #e02020; }
.ax { font: 11px "Liberation Serif", serif; fill: #222; }
.num { font: bold 9px "Liberation Serif", serif; fill: #123; }

.titlebar { display: flex; align-items: center; gap: 5px; height: 23px; padding-left: 2px; background: #fff; }
.logo { width: 16px; height: 16px; }
.titlebar, .menubar { font-family: Roboto, sans-serif; }
.menubar { display: flex; align-items: center; height: 24px; color: #55565f; }
.menubar a { color: inherit; text-decoration: none; margin-right: 13px; }
.menu-logo { width: 16px; height: 13px; margin-right: 10px; }
.grip { width: 4px; height: 16px; margin: 0 3px; background: linear-gradient(#a9afbc, #a9afbc) 0 0 / 2px 2px, transparent; flex: none; }
.grip { background: repeating-linear-gradient(#a4aab8 0 2px, transparent 2px 4px) left / 2px 100% no-repeat; }

.toolrow { display: flex; height: 26px; }
.toolbar { display: flex; align-items: center; padding-right: 2px; background: linear-gradient(#eceff6, #dde1ea); border-bottom: 1px solid #b4b9c4; border-radius: 3px; }
.toolbar button { width: 22px; height: 22px; display: grid; place-items: center; border: 1px solid transparent; flex: none; }
.toolbar svg { width: 18px; height: 18px; }
.toolbar .on { background: linear-gradient(#fcd59c, #fbb964 50%, #fde0a0); border-color: #a8905c; }
.toolbar .off { opacity: .45; }
.toolbar .drop { width: 13px; }
.drop::after { content: ""; border: 3px solid transparent; border-top: 4px solid #777; border-bottom: 0; }
.sep { width: 2px; height: 14px; margin: 0 3px; background: #b4b9c4; border-right: 1px solid #f6f8fc; flex: none; }
.second .sep { margin: 0 4px; }
.case { width: 215px; height: 19px; margin: 0 3px 0 2px; padding: 0 3px; border: 1px solid #fff; border-radius: 0; appearance: none; color: #000; font: 12px Roboto, sans-serif;
  background: conic-gradient(from 315deg at 50% 100%, #777 90deg, transparent 0) right 4px center / 6px 3px no-repeat, linear-gradient(#dfe3ec, #dfe3ec) right / 14px no-repeat, #fff; }

main { display: flex; flex: 1; min-height: 0; padding-top: 1px; }
.navigator { width: 361px; margin-right: 5px; display: flex; flex-direction: column; border: 1px solid #b4bac8; border-top: 0; flex: none; }
.nav-head { display: flex; align-items: center; gap: 9px; height: 20px; padding: 0 4px 0 3px; background: #bac1cb; border-bottom: 1px solid #a4abba; color: #444; }
.nav-head h2 { flex: 1; font-family: Roboto, sans-serif; }
.nav-head button, .panel-head button { width: 9px; height: 9px; }
.tree { flex: 1; margin: 0; padding-top: 2px; border: solid #e6e9f2; border-width: 0 2px; background: #fcfbf4; }
.tree li { position: relative; }
.tree li::before { content: ""; position: absolute; left: 11px; top: 0; bottom: 0; border-left: 1px dotted #888; }
.tree li:last-child::before { bottom: auto; height: 10px; }
.tree > li:first-child::before { top: 9px; }
.tree ul { padding-left: 19px; }
.row { position: relative; display: flex; align-items: center; height: 18px; padding-left: 7px; }
.row::before { content: ""; width: 8px; order: 1; border-top: 1px dotted #888; margin-top: 1px; }
.leaf::before { width: 12px; margin-left: 5px; }
.row label { order: 2; display: flex; align-items: center; white-space: nowrap; }
.row svg { width: 16px; height: 16px; margin: 0 5px 0 2px; }
.tg { position: relative; width: 9px; height: 9px; border: 1px solid #8a8f9a; border-radius: 1px; margin-top: 2px;
  background: linear-gradient(#2b4f9c, #2b4f9c) center / 5px 1px no-repeat, #f6f6f4; }
.plus { background: linear-gradient(#2b4f9c, #2b4f9c) center / 5px 1px no-repeat, linear-gradient(#2b4f9c, #2b4f9c) center / 1px 5px no-repeat, #f6f6f4; }
.row input { appearance: none; width: 13px; height: 13px; margin: 0; border: 1px solid #3c4250; background: linear-gradient(135deg, #fff, #ccd3e0); display: grid; place-items: center; }
.row input:checked::after { content: ""; width: 5px; height: 8px; border: solid #000; border-width: 0 2px 2px 0; rotate: 40deg; margin-top: -2px; }
.row .mixed::after { content: ""; width: 7px; height: 7px; background: #989898; }
.marked::after { content: ""; position: absolute; left: 0; top: -1px; width: 89px; height: 21px; border: 3px solid #e84c44; }

.viewport { position: relative; flex: 1; min-width: 0; background: #fff; border: 1px solid #666; border-width: 1px 0 0 1px; overflow: hidden; }
.model { width: 100%; }
.caption { position: absolute; left: 4px; top: 5px; font: 11px/14px "Liberation Sans", sans-serif; }
.foot { top: auto; bottom: 5px; }
.values, .axes { font: 9px "Liberation Sans", sans-serif; }
.values { fill: #0f0; }
.tip { position: absolute; width: 104px; height: 87px; padding: 2px; border: 1px solid #000; background: rgba(255, 250, 240, .7); color: #339a33; font: 12px/14px "Liberation Mono", monospace; }
.t1 { left: 373px; top: 325px; }
.t2 { left: 819px; top: 281px; }
.t3 { left: 269px; top: 522px; }
.t4 { left: 715px; top: 477px; }
.outline { fill: none; stroke: #0f0; stroke-width: 1.500px; }
.iso { stroke: #701818; stroke-width: 1px; }
.mesh { fill: none; stroke: #c4b8c0; stroke-dasharray: 1 2; }
.inset { fill: none; stroke: #b0b0b4; stroke-dasharray: 9 3; }
.area { fill: #0e3; fill-opacity: .08; stroke: #0f0; }
.arrow { stroke: #3f3; }
.head { fill: #0f0; }
.support { fill: #3fdf3f; }

.panel { position: absolute; right: 7px; top: 70px; width: 163px; height: 516px; display: flex; flex-direction: column; padding: 0 2px 0 3px; background: #e6ebf4; border: 1px solid #f0f2f8; border-right: 2px solid #8a8d94; border-bottom: 2px solid #8a8d94; font: 11px/17px Roboto, sans-serif; }
.panel-head { display: flex; align-items: center; height: 26px; padding: 4px 3px 0 2px; color: #444; }
.panel-head h2 { flex: 1; font-weight: bold; font-size: 12px; }
.panel-body { flex: 1; display: flex; flex-direction: column; padding: 4px 3px 4px 5px; background: #efefef; border: 1px solid #a8aebc; }
.scale { display: flex; height: 215px; padding: 10px 0 0 43px; background: #faf6f0; border: 1px solid #a0a0a0; border-color: #a0a0a0 #fff #fff #a0a0a0; }
.bands { width: 27px; }
.bands li { height: 17px; border: 1px solid #000; border-bottom: 0; }
.bands li:last-child { height: 18px; border-bottom: 1px solid #000; }
.ticks { margin-top: -8px; }
.ticks li { display: flex; align-items: center; gap: 4px; height: 17px; font-size: 12px; }
.ticks li::before { content: ""; width: 6px; border-top: 1px solid #000; }
.c10 { background: #b80000; fill: #b80000; }
.c9 { background: #f00; fill: #f00; }
.c8 { background: #ffa800; fill: #ffa800; }
.c7 { background: #d0d000; fill: #d0d000; }
.c6 { background: #ff0; fill: #ff0; }
.c5 { background: #0f0; fill: #0f0; }
.c4 { background: #00e888; fill: #00e888; }
.c3 { background: #00f8f8; fill: #00f8f8; }
.c2 { background: #0098ff; fill: #0098ff; }
.c1 { background: #00f; fill: #00f; }
.c0 { background: #0000a0; fill: #0000a0; }
.panel dl { display: grid; grid-template-columns: 26px 12px 24px; align-content: center; justify-content: center; margin-top: 10px; height: 36px; background: #f0f4fa; border: 1px solid #dde3f2; border-right-color: #a8a8f0; border-bottom-color: #a8a8f0; font-size: 12px; }
.detail { width: 25px; height: 21px; margin: auto 0 0 auto; border: 1px solid #aaa; outline: 1px dotted #333; outline-offset: -3px; padding: 3px; background: #e6e6e6; }
.tabs { display: flex; align-items: flex-start; gap: 8px; height: 26px; padding: 0 3px; background: #cfd3dd; }
.tabs button { width: 22px; height: 21px; display: grid; place-items: center; }
.tabs svg { width: 16px; height: 16px; }
.tabs .active { background: #eef1f8; border: 1px solid #b8d8dc; border-top: 0; border-radius: 0 0 3px 3px; }
```
FILE: script.js
```javascript
const NS = 'http://www.w3.org/2000/svg';
const LX = 8, LY = 5, SAG = 81, DROP = 52;
const L = [464.5, 492], DU = [549.5, -240.5], DV = [342, 151.5];

function add(parent, d, cls) {
  const p = document.createElementNS(NS, 'path');
  p.setAttribute('d', d);
  p.setAttribute('class', cls);
  document.getElementById(parent).appendChild(p);
}

// Navier series of a simply supported plate under uniform load
function rawW(u, v) {
  let s = 0;
  for (let m = 1; m < 10; m += 2)
    for (let n = 1; n < 10; n += 2)
      s += Math.sin(m * Math.PI * u) * Math.sin(n * Math.PI * v) /
        (m * n * (m * m / LX / LX + n * n / LY / LY) ** 2);
  return s;
}
const W0 = rawW(.5, .5);
const w = (u, v) => rawW(u, v) / W0;

function point(u, v) {
  return [L[0] + u * DU[0] + v * DV[0], L[1] + u * DU[1] + v * DV[1] + SAG * w(u, v)];
}
const path = pts => 'M' + pts.map(p => p[0].toFixed(1) + ' ' + p[1].toFixed(1)).join('L');

function contour(level) {
  const pts = [];
  for (let i = 0; i < 240; i++) {
    const a = i * Math.PI / 120, c = Math.cos(a), s = Math.sin(a);
    let lo = 0, hi = .5 / Math.max(Math.abs(c), Math.abs(s));
    for (let k = 0; k < 24; k++) {
      const r = (lo + hi) / 2;
      if (w(.5 + r * c, .5 + r * s) > level) lo = r; else hi = r;
    }
    pts.push(point(.5 + lo * c, .5 + lo * s));
  }
  return path(pts) + 'z';
}

function line(u1, v1, u2, v2) {
  const pts = [];
  for (let i = 0; i <= 40; i++) pts.push(point(u1 + (u2 - u1) * i / 40, v1 + (v2 - v1) * i / 40));
  return path(pts);
}

function support(layer, x, y) {
  add(layer, `M${x - 13} ${y + 3}l13-6 13 6-13 6zM${x - 4} ${y - 5}a4 4 0 1 1 8 0l1 5h-10z`, 'support');
}

// Support forces along an edge: distance from the corner in metres, offset in pixels
const corner = [[0, -166], [.125, -55], [.25, -30]];
const short = [[.375, 18], [.5, 23], [.625, 28], [.75, 34], [1, 38], [1.25, 41], [1.5, 42], [1.75, 43], [2, 46], [2.5, 49]];
const long = [[.375, 18], [.5, 22], [.625, 25], [.75, 31], [1, 34], [1.25, 37], [1.5, 38], [1.75, 39], [2, 44], [2.5, 47], [3, 47], [3.5, 47], [4, 47]];

function reaction(layer, from, to, len, half) {
  const one = corner.concat(half);
  const mirrored = one.slice(0, -1).reverse().map(([s, h]) => [len - s, h]);
  const all = one.concat(mirrored).map(([s, h]) => {
    const t = s / len;
    return [from[0] + (to[0] - from[0]) * t, from[1] + (to[1] - from[1]) * t + DROP, h];
  });
  const first = all[0], last = all[all.length - 1];
  add(layer, path([first, ...all.map(p => [p[0], p[1] + p[2]]), last]) + 'z', 'area');
  for (const [x, y, h] of all) {
    add(layer, `M${x} ${y}V${y + h}`, 'arrow');
    add(layer, h > 0 ? `M${x} ${y}l3 8h-6z` : `M${x} ${y}l3-8h-6z`, 'head');
  }
}

const T = [L[0] + DU[0], L[1] + DU[1]];
const B = [L[0] + DV[0], L[1] + DV[1]];
const R = [T[0] + DV[0], T[1] + DV[1]];

reaction('back', L, T, LX, long);
reaction('back', T, R, LY, short);
[[522, 527], [1301, 437], [636, 577], [750, 627], [861, 629], [971, 581], [1081, 534], [1191, 485]].forEach(p => support('back', ...p));

add('plate', path([L, T, R, B]) + 'z', 'c0');
for (let k = 1; k <= 10; k++) add('plate', contour(k / 11), 'iso c' + k);
for (let i = 1; i < 16; i++) add('plate', line(i / 16, 0, i / 16, 1), 'mesh');
for (let j = 1; j < 10; j++) add('plate', line(0, j / 10, 1, j / 10), 'mesh');
for (const q of [1, 2, 3, 5]) {
  const a = q / 64, b = q / 40, e = .12, f = .18;
  for (const [p, x0] of [[a, 0], [1 - a, 0], [a, 1], [1 - a, 1]]) add('plate', line(p, x0, p, x0 ? 1 - f : f), 'mesh');
  for (const [p, x0] of [[b, 0], [1 - b, 0], [b, 1], [1 - b, 1]]) add('plate', line(x0, p, x0 ? 1 - e : e, p), 'mesh');
}
const iu = .031, iv = .05;
add('plate', line(iu, iv, 1 - iu, iv), 'inset');
add('plate', line(iu, 1 - iv, 1 - iu, 1 - iv), 'inset');
add('plate', line(iu, iv, iu, 1 - iv), 'inset');
add('plate', line(1 - iu, iv, 1 - iu, 1 - iv), 'inset');
add('plate', path([L, T, R, B]) + 'z', 'outline');

reaction('front', L, B, LY, short);
reaction('front', B, R, LX, long);

document.querySelectorAll('.mixed').forEach(box => { box.indeterminate = true; });
```
